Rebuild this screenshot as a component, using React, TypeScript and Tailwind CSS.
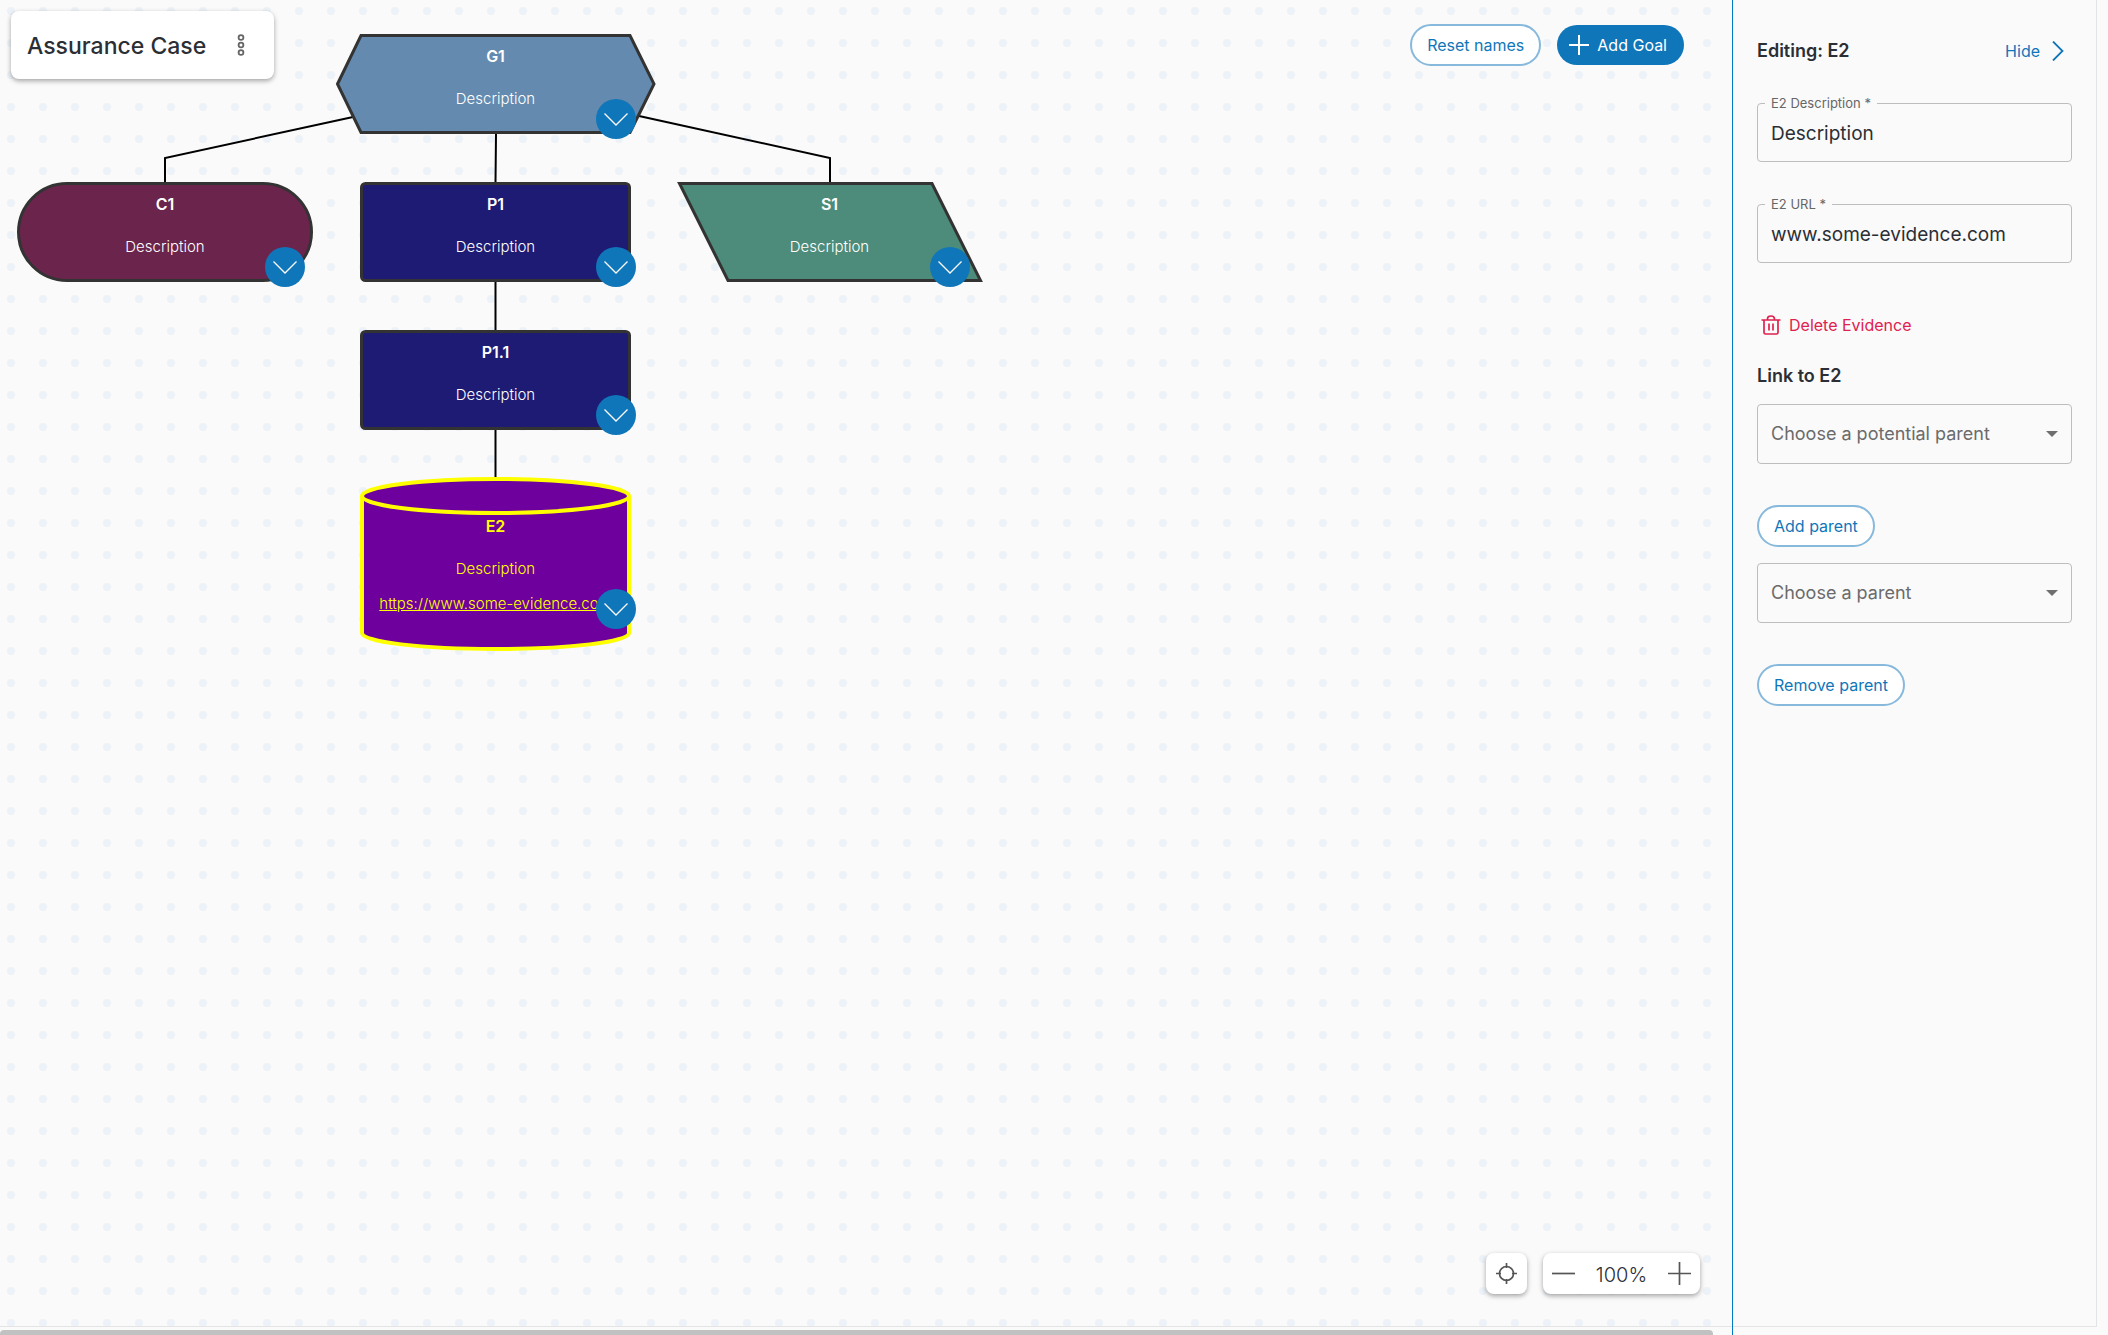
import React from "react";

type Shape = "hexagon" | "pill" | "box" | "slant" | "cylinder";

interface CaseNode {
  id: string;
  shape: Shape;
  x: number;
  y: number;
  w: number;
  h: number;
  toggleX: number;
  link?: string;
}

const nodes: CaseNode[] = [
  { id: "G1", shape: "hexagon", x: 336, y: 34, w: 319, h: 100, toggleX: 260 },
  { id: "C1", shape: "pill", x: 17, y: 182, w: 296, h: 100, toggleX: 248 },
  { id: "P1", shape: "box", x: 360, y: 182, w: 271, h: 100, toggleX: 236 },
  { id: "S1", shape: "slant", x: 677, y: 182, w: 305, h: 100, toggleX: 253 },
  { id: "P1.1", shape: "box", x: 360, y: 330, w: 271, h: 100, toggleX: 236 },
  {
    id: "E2",
    shape: "cylinder",
    x: 360,
    y: 477,
    w: 271,
    h: 174,
    toggleX: 236,
    link: "https://www.some-evidence.com",
  },
];

function NodeShape({ node }: { node: CaseNode }) {
  const { shape, w, h } = node;
  return (
    <svg width={w} height={h} className="absolute inset-0 overflow-visible" aria-hidden="true">
      {shape === "hexagon" && (
        <polygon points="1.5,50 25,1.5 294,1.5 318,50 294,98.5 25,98.5" fill="#648baf" stroke="#333" strokeWidth="3" />
      )}
      {shape === "pill" && (
        <rect x="1.5" y="1.5" width={w - 3} height={h - 3} rx="48.5" fill="#6b254d" stroke="#333" strokeWidth="3" />
      )}
      {shape === "box" && (
        <rect x="1.5" y="1.5" width={w - 3} height={h - 3} rx="4" fill="#1e1b74" stroke="#333" strokeWidth="3" />
      )}
      {shape === "slant" && (
        <polygon points="2.5,1.5 255,1.5 303.5,98.5 51,98.5" fill="#4d8c7a" stroke="#333" strokeWidth="3" />
      )}
      {shape === "cylinder" && (
        <g fill="#6e009d" stroke="#ff0" strokeWidth="4">
          <path d="M2 19V156C2 165 62 172 135.500 172S269 165 269 156V19" />
          <ellipse cx="135.500" cy="19" rx="133.500" ry="17" />
        </g>
      )}
    </svg>
  );
}

function NodeCard({ node }: { node: CaseNode }) {
  const selected = node.shape === "cylinder";
  return (
    <article
      className={"absolute text-center " + (selected ? "text-[#ff0]" : "text-white")}
      style={{ left: node.x, top: node.y, width: node.w, height: node.h }}
    >
      <NodeShape node={node} />
      <div className={"relative flex flex-col items-center " + (selected ? "pt-[39px]" : "pt-3")}>
        <h3 className="text-base leading-5 font-semibold">{node.id}</h3>
        <p className="mt-[23px] text-[15px] leading-5 font-light">Description</p>
        {node.link && (
          <a href={node.link} className="mt-[15px] text-[15px] leading-5 font-light whitespace-nowrap underline">
            {node.link}
          </a>
        )}
      </div>
      <button
        type="button"
        aria-label={"Expand " + node.id}
        className="absolute flex size-10 items-center justify-center rounded-full bg-[#0f76b9] text-white"
        style={{ left: node.toggleX, bottom: selected ? 22 : -5 }}
      >
        <svg width="24" height="24" viewBox="0 0 24 24" fill="none" stroke="currentColor" strokeWidth="1.300">
          <path d="M.5 6.500 12 18 23.500 6.500" />
        </svg>
      </button>
    </article>
  );
}

function TextField({ id, label, value }: { id: string; label: string; value: string }) {
  return (
    <div className="relative">
      <input
        id={id}
        defaultValue={value}
        required
        className="block h-[59px] w-full rounded border border-[#bdbdbd] bg-transparent px-[13px] pt-0.5 text-[19px] text-[#2b2f35] outline-none"
      />
      <label htmlFor={id} className="absolute -top-2 left-2 bg-[#fafafa] px-1.5 text-[13px] leading-4 text-[#666]">
        {label} *
      </label>
    </div>
  );
}

function ParentSelect({ label }: { label: string }) {
  return (
    <div className="relative">
      <select
        aria-label={label}
        className="block h-[60px] w-full appearance-none rounded border border-[#bdbdbd] bg-transparent px-[13px] text-lg text-[#6b6b6b] outline-none"
      >
        <option>{label}</option>
      </select>
      <svg width="12" height="6" viewBox="0 0 12 6" className="pointer-events-none absolute top-[27px] right-[14px]" aria-hidden="true">
        <path d="M0 0H12L6 6Z" fill="#6f6f6f" />
      </svg>
    </div>
  );
}

function OutlineButton({ children }: { children: React.ReactNode }) {
  return (
    <button
      type="button"
      className="h-[42px] rounded-full border-2 border-[#87b9dc] bg-white px-[15px] text-base whitespace-nowrap text-[#0f76b9]"
    >
      {children}
    </button>
  );
}

export default function App() {
  return (
    <div className="flex h-screen overflow-hidden bg-[#fafafa] font-['Inter',sans-serif] text-[#2b2f35]">
      <main className="flex min-w-0 flex-1 flex-col">
        <section className="relative min-h-0 flex-1 overflow-hidden border-b border-[#e4e4e4]">
          <svg className="absolute inset-0 h-full w-full" aria-hidden="true">
            <defs>
              <pattern id="dots" x="-5" y="-5" width="32" height="32" patternUnits="userSpaceOnUse">
                <circle cx="16" cy="16" r="4" fill="#ecf2f7" />
              </pattern>
            </defs>
            <rect width="100%" height="100%" fill="url(#dots)" />
            <g fill="none" stroke="#000" strokeWidth="2">
              <path d="M353 117 165 158V182" />
              <path d="M639 116 830 158V182" />
              <path d="M496 134 495.500 182M495.500 282V330M495.500 430V478" />
            </g>
          </svg>

          {nodes.map((node) => (
            <NodeCard key={node.id} node={node} />
          ))}

          <header className="absolute top-[11px] left-[11px] flex h-[68px] items-center rounded-lg bg-white pr-[26px] pl-4 shadow-[0_2px_5px_rgba(0,0,0,0.35)]">
            <h1 className="pt-0.5 text-[23px] leading-8 font-medium whitespace-nowrap">Assurance Case</h1>
            <button type="button" aria-label="Case menu" className="ml-7 text-[#666]">
              <svg width="14" height="24" viewBox="0 0 14 24" fill="none" stroke="currentColor" strokeWidth="1.800">
                <circle cx="7" cy="4.500" r="2.400" />
                <circle cx="7" cy="12" r="2.400" />
                <circle cx="7" cy="19.500" r="2.400" />
              </svg>
            </button>
          </header>

          <div className="absolute top-6 right-12 flex items-center gap-4">
            <OutlineButton>Reset names</OutlineButton>
            <button
              type="button"
              className="flex h-10 items-center gap-2 rounded-full bg-[#0f76b9] pr-[17px] pl-3 text-base whitespace-nowrap text-white"
            >
              <svg width="20" height="20" viewBox="0 0 20 20" stroke="currentColor" strokeWidth="2">
                <path d="M10 0V20M0 10H20" />
              </svg>
              Add Goal
            </button>
          </div>

          <div className="absolute right-8 bottom-8 flex gap-4 text-[#666]">
            <button
              type="button"
              aria-label="Centre view"
              className="flex size-[41px] items-center justify-center rounded-lg bg-white shadow-[0_2px_5px_rgba(0,0,0,0.35)]"
            >
              <svg width="21" height="21" viewBox="0 0 21 21" fill="none" stroke="#555" strokeWidth="1.700">
                <circle cx="10.500" cy="10.500" r="7" />
                <path d="M10.500 0V5M10.500 16V21M0 10.500H5M16 10.500H21" />
              </svg>
            </button>
            <div className="flex h-[41px] w-[157px] items-center justify-between rounded-lg bg-white px-[9px] shadow-[0_2px_5px_rgba(0,0,0,0.35)]">
              <button type="button" aria-label="Zoom out">
                <svg width="23" height="23" viewBox="0 0 23 23" stroke="#555" strokeWidth="1.700">
                  <path d="M0 11.500H23" />
                </svg>
              </button>
              <output className="pt-0.5 text-xl leading-6 font-light text-[#2b2f35]">100%</output>
              <button type="button" aria-label="Zoom in">
                <svg width="23" height="23" viewBox="0 0 23 23" stroke="#555" strokeWidth="1.700">
                  <path d="M0 11.500H23M11.500 0V23" />
                </svg>
              </button>
            </div>
          </div>
        </section>
        <div className="pt-[3px] pr-[19px]">
          <div className="h-[5px] rounded-t-sm bg-[#c1c1c1]" />
        </div>
      </main>

      <aside className="flex w-[376px] shrink-0 border-l border-[#007bc3] pr-[11px] pb-2">
        <div className="flex-1 border-r border-b border-[#e4e4e4] px-6 pt-[39px]">
          <div className="flex items-center justify-between pr-2">
            <h2 className="text-lg leading-6 font-semibold">Editing: E2</h2>
            <button type="button" className="flex items-center gap-3 text-base leading-6 text-[#0f76b9]">
              Hide
              <svg width="12" height="20" viewBox="0 0 12 20" fill="none" stroke="currentColor" strokeWidth="1.800">
                <path d="M1 .5 10.500 10 1 19.500" />
              </svg>
            </button>
          </div>

          <form className="mt-10 flex flex-col items-start">
            <div className="flex w-full flex-col gap-[42px]">
              <TextField id="description" label="E2 Description" value="Description" />
              <TextField id="url" label="E2 URL" value="www.some-evidence.com" />
            </div>

            <button type="button" className="mt-[50px] ml-1 flex items-center gap-2 text-base leading-6 text-[#e0214f]">
              <svg width="20" height="20" viewBox="0 0 20 20" fill="none" stroke="currentColor" strokeWidth="1.700">
                <path d="M.5 5H19.500M3 5V17.500Q3 19 4.500 19H15.500Q17 19 17 17.500V5M6.500 5V4Q6.500 1 10 1T13.500 4V5M8 8.500V15.500M12 8.500V15.500" />
              </svg>
              Delete Evidence
            </button>

            <h2 className="mt-[27px] text-lg leading-6 font-semibold">Link to E2</h2>
            <div className="mt-4 mb-[41px] w-full">
              <ParentSelect label="Choose a potential parent" />
            </div>
            <OutlineButton>Add parent</OutlineButton>
            <div className="mt-4 mb-[41px] w-full">
              <ParentSelect label="Choose a parent" />
            </div>
            <OutlineButton>Remove parent</OutlineButton>
          </form>
        </div>
      </aside>
    </div>
  );
}
